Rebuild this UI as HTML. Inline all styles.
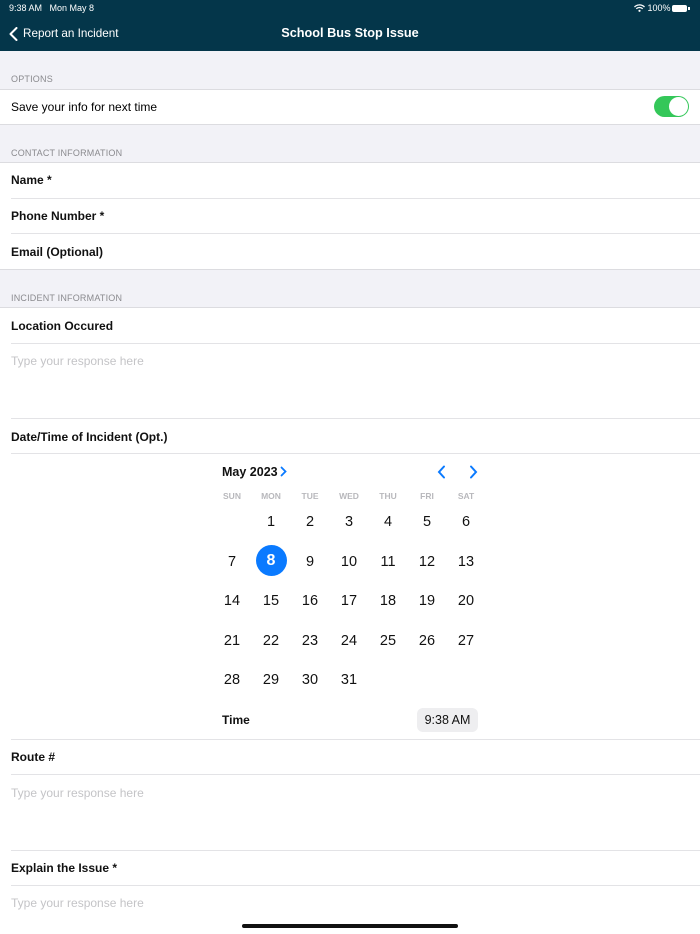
<!DOCTYPE html>
<html><head><meta charset="utf-8"><style>
*{margin:0;padding:0;box-sizing:border-box}
body{width:700px;height:934px;overflow:hidden;background:#f2f2f7;font-family:"Liberation Sans",sans-serif;position:relative;color:#000}
.a{position:absolute}
.w{position:absolute;left:0;width:700px;background:#fff}
.sep{position:absolute;left:11px;right:0;height:1px;background:#e3e3e6}
.fsep{position:absolute;left:0;right:0;height:1px;background:#dcdce0}
.lbl{position:absolute;left:11px;font-size:12px;font-weight:bold;color:#111}
.sec{position:absolute;left:11px;font-size:9px;color:#8a8a8e;letter-spacing:.2px}
.ph{position:absolute;left:11px;font-size:12px;color:#c4c4c7}
.d{position:absolute;width:30px;margin-left:-15px;text-align:center;font-size:14.5px;color:#111}
.wd{position:absolute;width:30px;margin-left:-15px;text-align:center;font-size:8.5px;color:#b8b8bc;font-weight:bold}
</style></head><body>
<div class="a" style="left:0;top:0;width:700px;height:51px;background:#04364a"></div>
<div class="a" style="left:9px;top:3px;font-size:9px;color:#fff">9:38 AM&nbsp;&nbsp; Mon May 8</div>
<div class="a" style="left:634px;top:3px;font-size:9px;color:#fff">
<svg width="11" height="8" viewBox="0 0 11 8" style="vertical-align:-1px"><path d="M0.5 3a7 7 0 0 1 10 0M2.3 4.8a4.5 4.5 0 0 1 6.4 0" stroke="#fff" stroke-width="1.3" fill="none"/><circle cx="5.5" cy="6.8" r="1.1" fill="#fff"/></svg> 100%</div>
<div class="a" style="left:672px;top:5px;width:15px;height:7px;background:#fff;border-radius:2px"></div>
<div class="a" style="left:688px;top:7px;width:1.5px;height:3px;background:#fff"></div>
<svg class="a" style="left:9px;top:27px" width="9" height="14" viewBox="0 0 9 14"><path d="M7.5 1L1.5 7l6 6" stroke="#fff" stroke-width="2" fill="none" stroke-linecap="round" stroke-linejoin="round"/></svg>
<div class="a" style="left:23px;top:27px;font-size:11.7px;color:#fff">Report an Incident</div>
<div class="a" style="left:0;width:700px;top:26px;text-align:center;font-size:12.7px;font-weight:bold;color:#fff">School Bus Stop Issue</div>

<div class="sec" style="top:74px">OPTIONS</div>
<div class="w" style="top:89px;height:35px"></div>
<div class="fsep" style="top:89px"></div><div class="fsep" style="top:124px"></div>
<div class="a" style="left:11px;top:100px;font-size:12px">Save your info for next time</div>
<div class="a" style="left:654px;top:96px;width:35px;height:21px;border-radius:11px;background:#34c759"></div>
<div class="a" style="left:669px;top:97px;width:19px;height:19px;border-radius:50%;background:#fff"></div>

<div class="sec" style="top:148px">CONTACT INFORMATION</div>
<div class="w" style="top:162px;height:107px"></div>
<div class="fsep" style="top:162px"></div>
<div class="lbl" style="top:173px">Name *</div>
<div class="sep" style="top:198px"></div>
<div class="lbl" style="top:209px">Phone Number *</div>
<div class="sep" style="top:233px"></div>
<div class="lbl" style="top:245px">Email (Optional)</div>
<div class="fsep" style="top:269px"></div>

<div class="sec" style="top:293px">INCIDENT INFORMATION</div>
<div class="w" style="top:307px;height:627px"></div>
<div class="fsep" style="top:307px"></div>
<div class="lbl" style="top:319px">Location Occured</div>
<div class="sep" style="top:343px"></div>
<div class="ph" style="top:354px">Type your response here</div>
<div class="sep" style="top:418px"></div>
<div class="lbl" style="top:430px">Date/Time of Incident (Opt.)</div>
<div class="sep" style="top:453px"></div>

<div class="a" style="left:222px;top:465px;font-size:12.5px;font-weight:bold;color:#111">May 2023</div>
<svg class="a" style="left:280px;top:466px" width="7" height="11" viewBox="0 0 7 11"><path d="M1.5 1.5l4 4-4 4" stroke="#0a7aff" stroke-width="1.8" fill="none" stroke-linecap="round"/></svg>
<svg class="a" style="left:437px;top:465px" width="9" height="14" viewBox="0 0 9 14"><path d="M7 1.5L2 7l5 5.5" stroke="#0a7aff" stroke-width="2" fill="none" stroke-linecap="round"/></svg>
<svg class="a" style="left:469px;top:465px" width="9" height="14" viewBox="0 0 9 14"><path d="M2 1.5L7 7l-5 5.5" stroke="#0a7aff" stroke-width="2" fill="none" stroke-linecap="round"/></svg>

<div class="wd" style="left:232px;top:491px">SUN</div>
<div class="wd" style="left:271px;top:491px">MON</div>
<div class="wd" style="left:310px;top:491px">TUE</div>
<div class="wd" style="left:349px;top:491px">WED</div>
<div class="wd" style="left:388px;top:491px">THU</div>
<div class="wd" style="left:427px;top:491px">FRI</div>
<div class="wd" style="left:466px;top:491px">SAT</div>

<div class="a" style="left:256px;top:545px;width:31px;height:31px;border-radius:50%;background:#0a7aff"></div>

<div class="d" style="left:271px;top:514px">1</div><div class="d" style="left:310px;top:514px">2</div><div class="d" style="left:349px;top:514px">3</div><div class="d" style="left:388px;top:514px">4</div><div class="d" style="left:427px;top:514px">5</div><div class="d" style="left:466px;top:514px">6</div>
<div class="d" style="left:232px;top:554px">7</div><div class="d" style="left:271px;top:552px;color:#fff;font-weight:bold;font-size:16px">8</div><div class="d" style="left:310px;top:554px">9</div><div class="d" style="left:349px;top:554px">10</div><div class="d" style="left:388px;top:554px">11</div><div class="d" style="left:427px;top:554px">12</div><div class="d" style="left:466px;top:554px">13</div>
<div class="d" style="left:232px;top:593px">14</div><div class="d" style="left:271px;top:593px">15</div><div class="d" style="left:310px;top:593px">16</div><div class="d" style="left:349px;top:593px">17</div><div class="d" style="left:388px;top:593px">18</div><div class="d" style="left:427px;top:593px">19</div><div class="d" style="left:466px;top:593px">20</div>
<div class="d" style="left:232px;top:633px">21</div><div class="d" style="left:271px;top:633px">22</div><div class="d" style="left:310px;top:633px">23</div><div class="d" style="left:349px;top:633px">24</div><div class="d" style="left:388px;top:633px">25</div><div class="d" style="left:427px;top:633px">26</div><div class="d" style="left:466px;top:633px">27</div>
<div class="d" style="left:232px;top:672px">28</div><div class="d" style="left:271px;top:672px">29</div><div class="d" style="left:310px;top:672px">30</div><div class="d" style="left:349px;top:672px">31</div>

<div class="a" style="left:222px;top:713px;font-size:12px;font-weight:bold;color:#111">Time</div>
<div class="a" style="left:417px;top:708px;width:61px;height:24px;border-radius:6px;background:#eeeef0;text-align:center;line-height:24px;font-size:12.5px;color:#111">9:38 AM</div>
<div class="sep" style="top:739px"></div>
<div class="lbl" style="top:750px">Route #</div>
<div class="sep" style="top:774px"></div>
<div class="ph" style="top:786px">Type your response here</div>
<div class="sep" style="top:850px"></div>
<div class="lbl" style="top:861px">Explain the Issue *</div>
<div class="sep" style="top:885px"></div>
<div class="ph" style="top:896px">Type your response here</div>
<div class="a" style="left:242px;top:924px;width:216px;height:4px;border-radius:2px;background:#111"></div>
</body></html>
